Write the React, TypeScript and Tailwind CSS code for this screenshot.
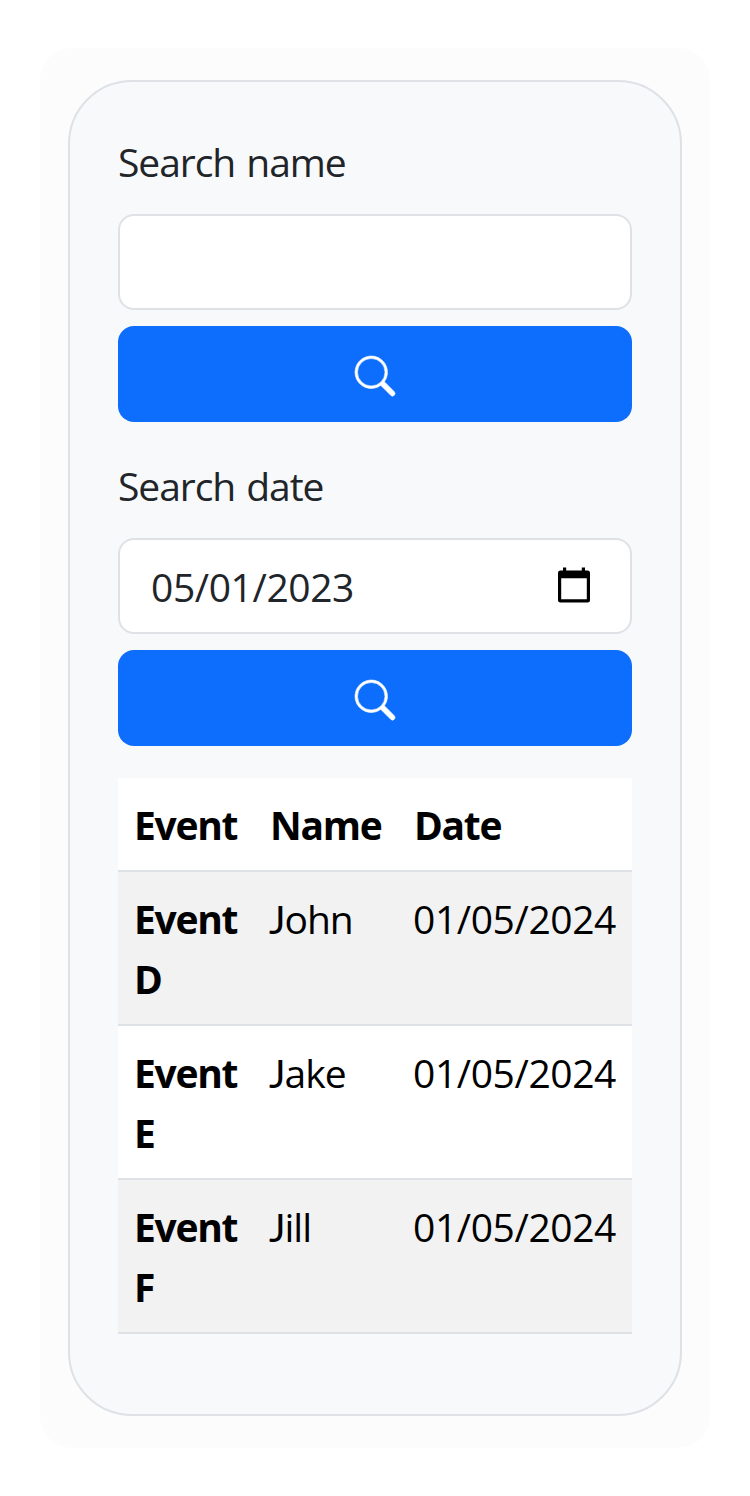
import { BsSearch } from "react-icons/bs";

const events = [
  { event: "Event D", name: "John", date: "01/05/2024" },
  { event: "Event E", name: "Jake", date: "01/05/2024" },
  { event: "Event F", name: "Jill", date: "01/05/2024" },
];

function SearchButton() {
  return (
    <button aria-label="Search" className="mt-4 flex h-24 w-full items-center justify-center rounded-[16px] bg-[#0d6efd] pt-1 text-white">
      <BsSearch className="size-10 overflow-visible" strokeWidth={0.25} />
    </button>
  );
}

function CalendarIcon() {
  return (
    <svg className="h-9 w-8" viewBox="0 0 32 36" fill="black">
      <path fillRule="evenodd" d="M5 .5h3.2v3h15.6v-3H27v3h2.5A2.5 2.5 0 0 1 32 6v27a2.5 2.5 0 0 1-2.5 2.5h-27A2.5 2.5 0 0 1 0 33V6a2.5 2.5 0 0 1 2.5-2.5H5zM3.2 11.2v21h25.6v-21z" />
    </svg>
  );
}

function FieldLabel({ children }: { children: string }) {
  return <label className="block h-[82px] tracking-[-1.05px] [word-spacing:2px]">{children}</label>;
}

export default function App() {
  return (
    <div className="min-h-[1496px] bg-white px-10 py-12 font-['Open_Sans',sans-serif] text-[39px] leading-[60px] text-[#212529]">
      <main className="h-[1400px] rounded-[32px] bg-[#fcfcfc] px-7 py-8">
        <div className="h-[1336px] rounded-[64px] border-2 border-[#dee2e6] bg-[#f8f9fa] px-12 pt-[50px]">
          <FieldLabel>Search name</FieldLabel>
          <div className="h-24 rounded-[16px] border-2 border-[#dee2e6] bg-white" />
          <SearchButton />
          <div className="h-[34px]" />
          <FieldLabel>Search date</FieldLabel>
          <div className="flex h-24 justify-between rounded-[16px] border-2 border-[#dee2e6] bg-white pr-10 pl-[31px]">
            <span className="pt-[17px] tracking-[-0.4px]">05/01/2023</span>
            <span className="pt-[27px]"><CalendarIcon /></span>
          </div>
          <SearchButton />
          <table className="mt-8 w-full table-fixed border-separate border-spacing-0 text-left text-black">
            <colgroup><col className="w-[136px]" /><col className="w-[144px]" /><col /></colgroup>
            <thead>
              <tr className="h-[94px] bg-white align-top tracking-[-1.3px]">
                {["Event", "Name", "Date"].map((heading) => (
                  <th key={heading} className="border-b-2 border-[#dee2e6] px-4 pt-[17px]">{heading}</th>
                ))}
              </tr>
            </thead>
            <tbody>
              {events.map((e) => (
                <tr key={e.event} className="h-[154px] bg-white align-top odd:bg-[#f2f2f2]">
                  <th className="border-b-2 border-[#dee2e6] px-4 pt-[17px] tracking-[-1.3px]">{e.event}</th>
                  <td className="border-b-2 border-[#dee2e6] pt-[17px] pl-[15px] tracking-[-1px] first-letter:font-['Lato']">{e.name}</td>
                  <td className="border-b-2 border-[#dee2e6] pt-[17px] pl-[15px] tracking-[-0.4px]">{e.date}</td>
                </tr>
              ))}
            </tbody>
          </table>
        </div>
      </main>
    </div>
  );
}
